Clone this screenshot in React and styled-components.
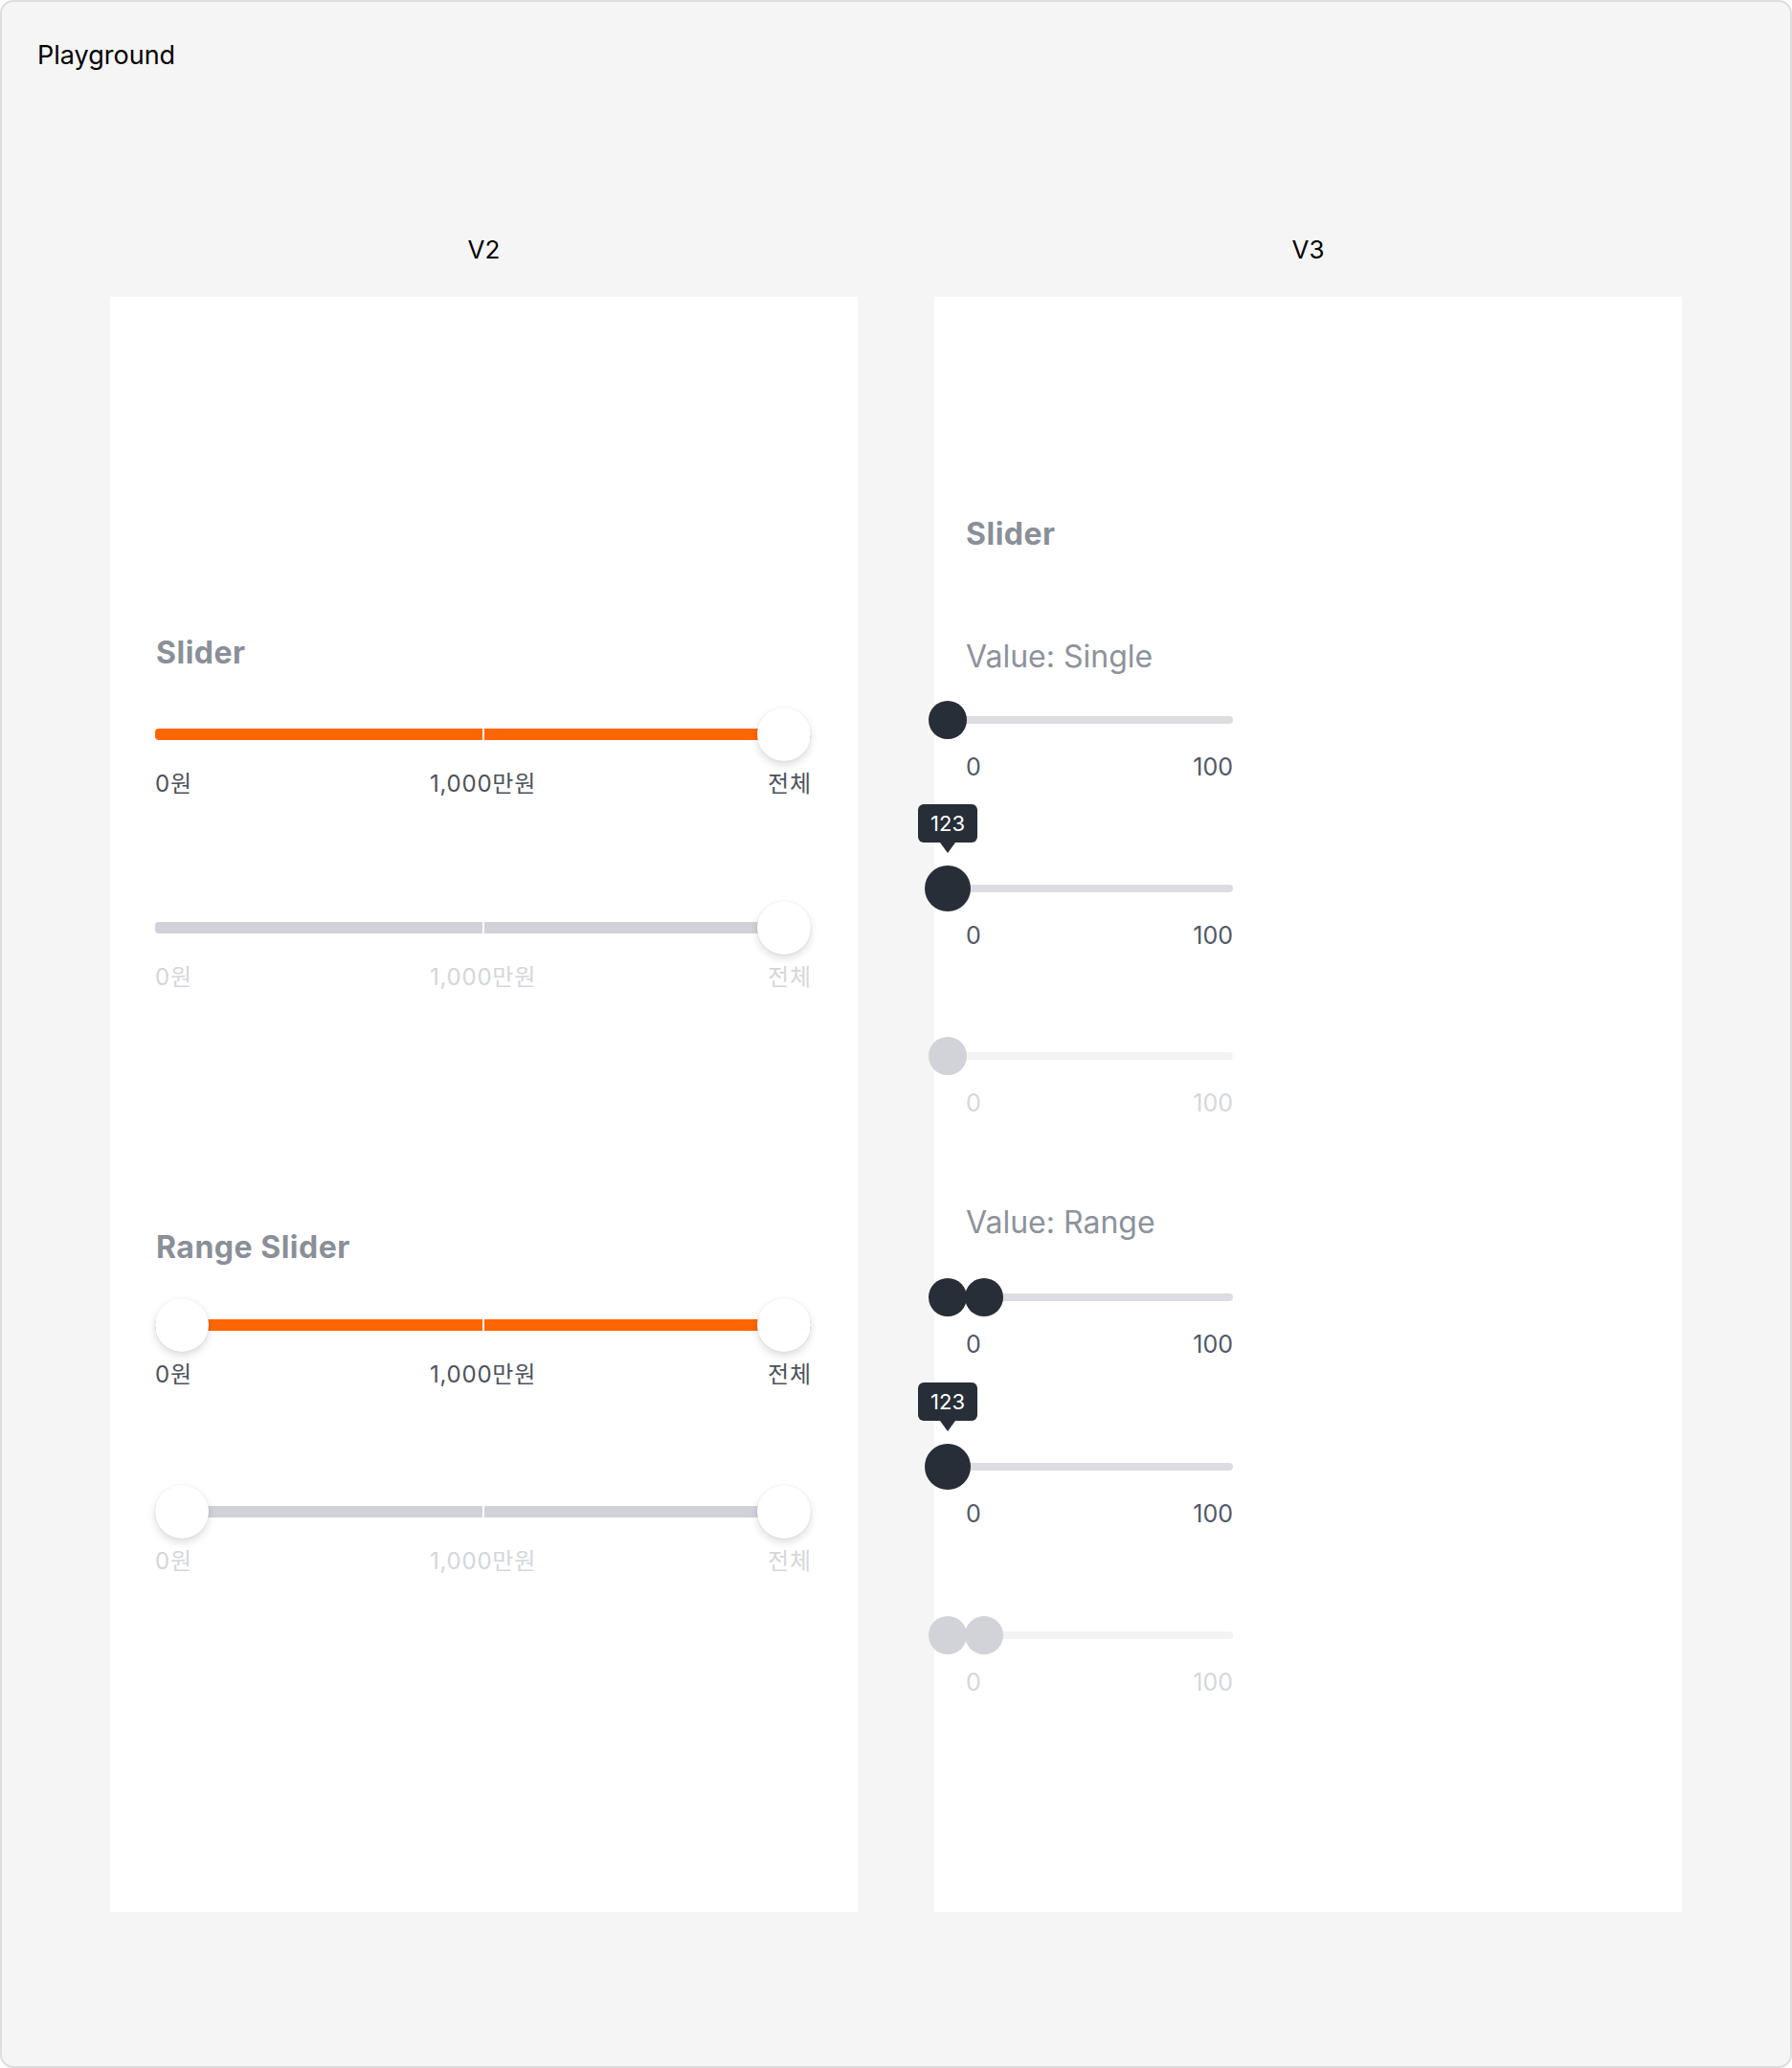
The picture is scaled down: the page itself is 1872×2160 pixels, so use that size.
import React from "react";
import styled, { createGlobalStyle } from "styled-components";

const GlobalStyle = createGlobalStyle`
  * { box-sizing: border-box; }
  html, body { margin: 0; padding: 0; background: #ffffff; }
  body {
    font-family: Inter, "Noto Sans CJK KR", sans-serif;
    -webkit-font-smoothing: antialiased;
  }
`;

const Frame = styled.div`
  width: 1872px;
  height: 2160px;
  background: #f5f5f5;
  border: 2px solid #dedede;
  border-radius: 14px;
  padding-top: 38.7px;
  overflow: hidden;
`;

const Title = styled.h1`
  margin: 0;
  padding-left: 37px;
  font-size: 27px;
  line-height: 33px;
  font-weight: 400;
  color: #000000;
`;

const Columns = styled.div`
  display: grid;
  grid-template-columns: 781px 781px;
  column-gap: 80px;
  margin-top: 170px;
  padding-left: 113px;
`;

const Column = styled.section`
  display: flex;
  flex-direction: column;
  align-items: center;
`;

const VersionLabel = styled.div`
  font-size: 26px;
  line-height: 32px;
  color: #000000;
  padding-top: 1px;
`;

const Panel = styled.div`
  width: 781px;
  height: 1687px;
  margin-top: 33px;
  background: #ffffff;
  padding: ${(p) => p.$pt}px ${(p) => p.$pr}px 0 ${(p) => p.$pl}px;
  display: flex;
  flex-direction: column;
  align-items: stretch;
`;

const Heading = styled.h2`
  margin: ${(p) => p.$mt || 0}px 0 0 ${(p) => p.$ml || 0}px;
  font-size: 32px;
  line-height: 38px;
  font-weight: 700;
  letter-spacing: 0.5px;
  color: #8a8f98;
`;

const SubHeading = styled.h3`
  margin: ${(p) => p.$mt || 0}px 0 0;
  font-size: 32px;
  line-height: 38px;
  font-weight: 400;
  color: #8d929b;
`;

/* ---------- V2 slider ---------- */

const V2Block = styled.div`
  margin-top: ${(p) => p.$mt}px;
`;

const V2Zone = styled.div`
  position: relative;
  height: 56px;
  display: flex;
  align-items: center;
`;

const V2Track = styled.div`
  position: relative;
  width: 100%;
  height: 12px;
  border-radius: 4px;
  background: ${(p) => (p.$disabled ? "#d1d2d7" : "#ff6600")};

  &::after {
    content: "";
    position: absolute;
    left: 50%;
    top: 0;
    bottom: 0;
    width: 2px;
    margin-left: -1px;
    background: #ffffff;
  }
`;

const V2Thumb = styled.div`
  position: absolute;
  top: 0;
  ${(p) => p.$side}: 0;
  width: 56px;
  height: 56px;
  border-radius: 50%;
  background: #ffffff;
  box-shadow: 0 4px 9px rgba(0, 0, 0, 0.14), 0 0 2px rgba(0, 0, 0, 0.08);
`;

const V2Labels = styled.div`
  display: grid;
  grid-template-columns: 1fr auto 1fr;
  margin-top: 9px;
  font-family: Inter, "Noto Sans CJK KR", sans-serif;
  font-size: 24px;
  line-height: 30px;
  letter-spacing: 0.8px;
  color: ${(p) => (p.$disabled ? "#d4d6db" : "#4d525c")};

  & > :nth-child(3) {
    text-align: right;
    margin-right: -0.8px;
  }
`;

const V2Slider = ({ range, disabled, mt }) => (
  <V2Block $mt={mt}>
    <V2Zone>
      <V2Track $disabled={disabled} />
      {range && <V2Thumb $side="left" />}
      <V2Thumb $side="right" />
    </V2Zone>
    <V2Labels $disabled={disabled}>
      <span>0원</span>
      <span>1,000만원</span>
      <span>전체</span>
    </V2Labels>
  </V2Block>
);

/* ---------- V3 slider ---------- */

const V3Block = styled.div`
  margin-top: ${(p) => p.$mt}px;
  width: 279px;
`;

const V3Zone = styled.div`
  position: relative;
  height: 48px;
  width: calc(100% + 19px);
  margin-left: -19px;
  display: flex;
  align-items: center;
`;

const V3Track = styled.div`
  width: 100%;
  height: 8px;
  border-radius: 4px;
  background: ${(p) => (p.$disabled ? "#f2f3f5" : "#dcdde2")};
`;

const V3Thumb = styled.div`
  position: absolute;
  top: 50%;
  left: ${(p) => p.$x}px;
  width: ${(p) => p.$size}px;
  height: ${(p) => p.$size}px;
  margin: ${(p) => -p.$size / 2}px 0 0 ${(p) => -p.$size / 2}px;
  border-radius: 50%;
  background: ${(p) => (p.$disabled ? "#d1d3d9" : "#272e37")};
`;

const Tooltip = styled.div`
  position: absolute;
  bottom: calc(100% + 24px);
  left: 50%;
  transform: translateX(-50%);
  width: 62px;
  height: 40px;
  border-radius: 6px;
  background: #272e37;
  color: #ffffff;
  font-size: 22px;
  line-height: 40px;
  text-align: center;

  &::after {
    content: "";
    position: absolute;
    top: 100%;
    left: 50%;
    margin-left: -8.5px;
    border-left: 8.5px solid transparent;
    border-right: 8.5px solid transparent;
    border-top: 11px solid #272e37;
  }
`;

const V3Labels = styled.div`
  display: flex;
  justify-content: space-between;
  margin-top: 10px;
  font-size: 25px;
  line-height: 30px;
  color: ${(p) => (p.$disabled ? "#d5d7dd" : "#515868")};
`;

const V3Slider = ({ thumbs, disabled, tooltip, mt }) => (
  <V3Block $mt={mt}>
    <V3Zone>
      <V3Track $disabled={disabled} />
      {thumbs.map((x, i) => (
        <V3Thumb
          key={i}
          $x={x}
          $size={tooltip && i === 0 ? 48 : 40}
          $disabled={disabled}
        >
          {tooltip && i === 0 && <Tooltip>123</Tooltip>}
        </V3Thumb>
      ))}
    </V3Zone>
    <V3Labels $disabled={disabled}>
      <span>0</span>
      <span>100</span>
    </V3Labels>
  </V3Block>
);

export default function App() {
  return (
    <>
      <GlobalStyle />
      <Frame>
        <Title>Playground</Title>
        <Columns>
          <Column>
            <VersionLabel>V2</VersionLabel>
            <Panel $pt={353} $pl={47} $pr={49}>
              <Heading $ml={1}>Slider</Heading>
              <V2Slider mt={38.5} />
              <V2Slider mt={106.5} disabled />
              <Heading $mt={248.5} $ml={1}>
                Range Slider
              </Heading>
              <V2Slider mt={33.6} range />
              <V2Slider mt={100.5} range disabled />
            </Panel>
          </Column>
          <Column>
            <VersionLabel>V3</VersionLabel>
            <Panel $pt={229.5} $pl={33} $pr={33}>
              <Heading>Slider</Heading>
              <SubHeading $mt={89.5}>Value: Single</SubHeading>
              <V3Slider mt={23} thumbs={[0]} />
              <V3Slider mt={88} thumbs={[0]} tooltip />
              <V3Slider mt={87.5} thumbs={[0]} disabled />
              <SubHeading $mt={90.8}>Value: Range</SubHeading>
              <V3Slider mt={35.2} thumbs={[0, 38]} />
              <V3Slider mt={89} thumbs={[0]} tooltip />
              <V3Slider mt={88} thumbs={[0, 38]} disabled />
            </Panel>
          </Column>
        </Columns>
      </Frame>
    </>
  );
}
